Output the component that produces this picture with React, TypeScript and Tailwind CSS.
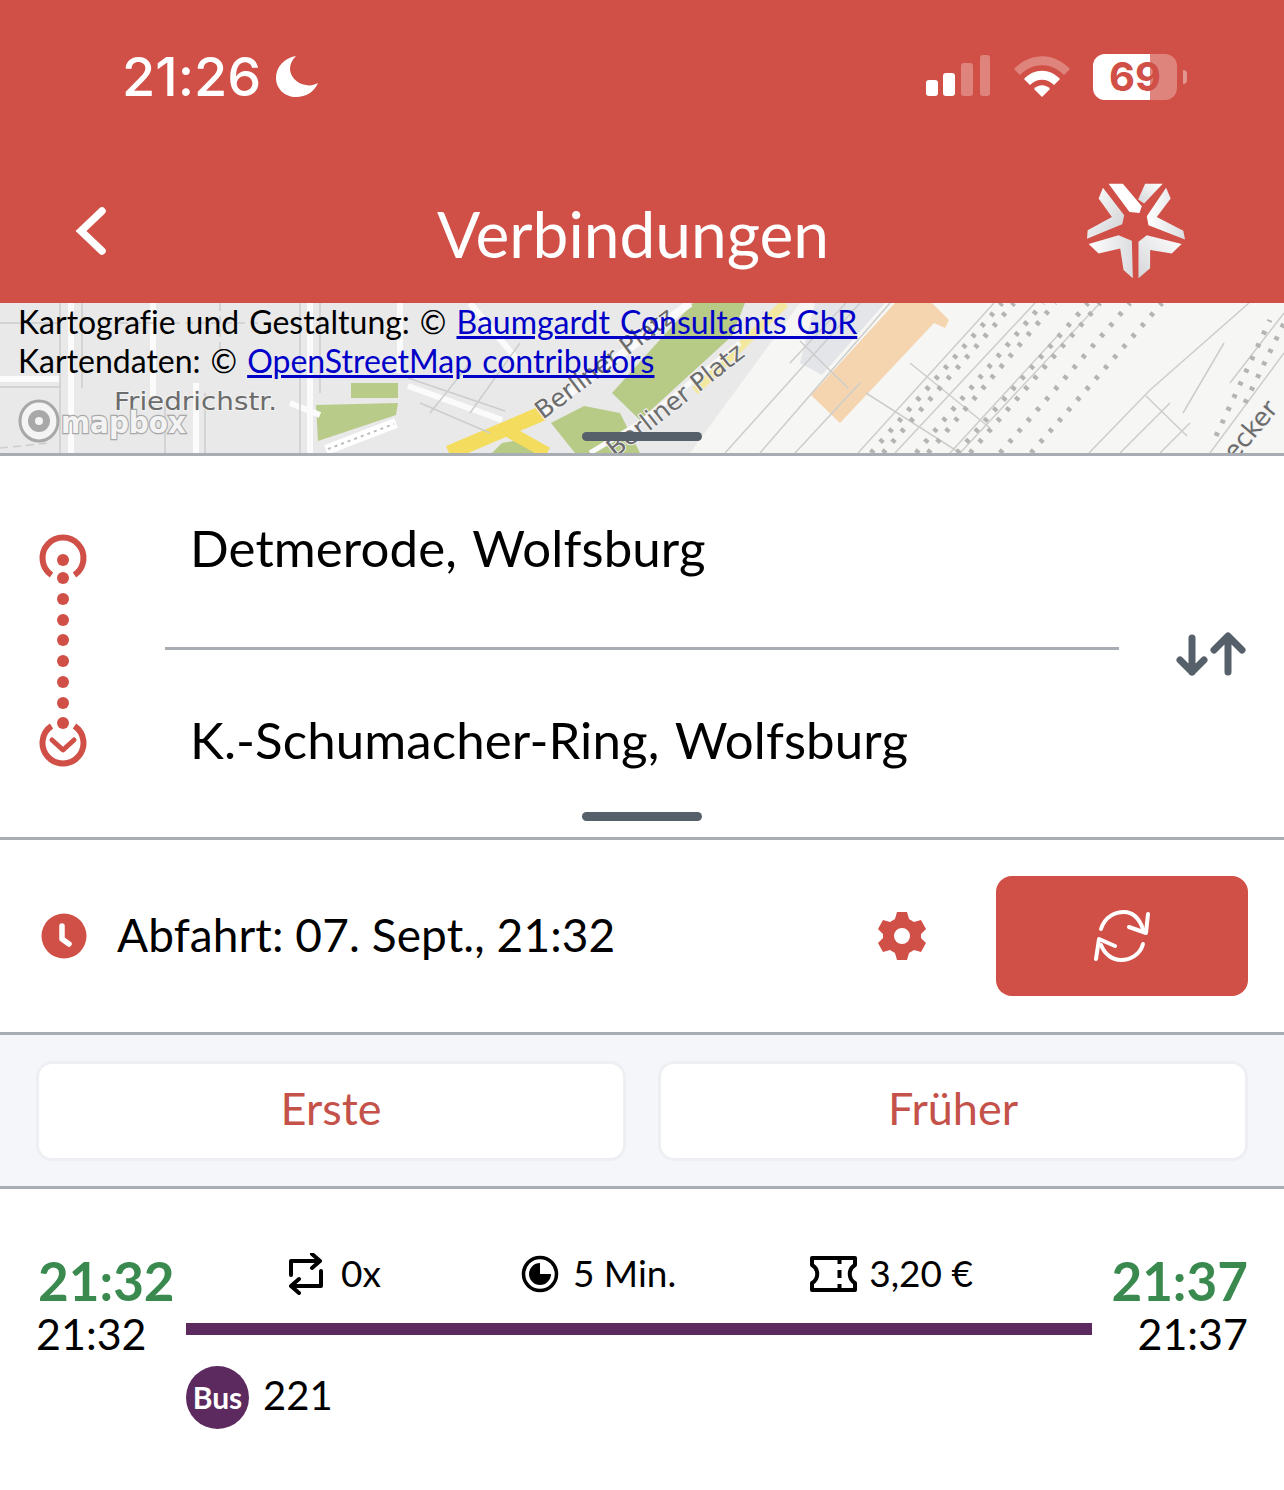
const font = { fontFamily: "Lato, 'Noto Sans', sans-serif" };
const mapLabel = { fontFamily: "'DejaVu Sans', sans-serif", paintOrder: "stroke" } as const;

function MoonIcon() {
  return (
    <svg width="42" height="42" viewBox="0 0 42 42">
      <path d="M20 0 C8 2 0 11 0 22 C0 33 9 41 20 41 C30 41 38 36 42 27 C38 29 34 30 30 29 C20 28 14 19 14 13 C14 8 16 4 20 0 Z" fill="#fff" />
    </svg>
  );
}

function Signal() {
  return (
    <svg width="66" height="44" viewBox="0 0 66 44">
      <rect x="1" y="25" width="12" height="16" rx="3" fill="#fff" />
      <rect x="18" y="18" width="12" height="23" rx="3" fill="#fff" />
      <rect x="36" y="8" width="12" height="33" rx="3" fill="#fff" fillOpacity="0.3" />
      <rect x="55" y="0" width="10" height="41" rx="3" fill="#fff" fillOpacity="0.3" />
    </svg>
  );
}

function Wifi() {
  return (
    <svg width="58" height="44" viewBox="0 0 58 44">
      <path d="M1 14 C17 -3 41 -3 57 14 L51 20 C38 7 20 7 7 20 Z" fill="#fff" fillOpacity="0.3" />
      <path d="M11 24 C21 13 37 13 47 24 L41 30 C34 23 24 23 17 30 Z" fill="#fff" />
      <path d="M21 34 C25 29 33 29 37 34 L29 42 Z" fill="#fff" />
    </svg>
  );
}

function Battery() {
  return (
    <div className="flex items-center">
      <div className="relative w-[84px] h-[46px] rounded-[12px] overflow-hidden bg-white/30">
        <div className="absolute left-0 top-0 bottom-0 w-[57px] bg-white" />
        <span className="absolute inset-0 flex items-center justify-center text-[40px] leading-none font-bold text-[#d04f46]" style={{ fontFamily: "Inter, sans-serif" }}>69</span>
      </div>
      <div className="w-[4px] h-[14px] ml-[6px] rounded-r-full bg-white/40" />
    </div>
  );
}

function BackChevron() {
  return (
    <svg width="36" height="50" viewBox="0 0 36 50" fill="none" stroke="#fff" strokeWidth="7.5" strokeLinecap="round" strokeLinejoin="miter">
      <path d="M29 5 L8 25 L29 45" />
    </svg>
  );
}

function Logo() {
  return (
    <svg width="102" height="98" viewBox="75 35 305 295">
      <defs>
        <linearGradient id="foldA" x1="0" y1="0" x2="1" y2="1">
          <stop offset="0" stopColor="#ffffff" />
          <stop offset="1" stopColor="#cfd0d3" />
        </linearGradient>
        <linearGradient id="foldB" x1="1" y1="0" x2="0" y2="1">
          <stop offset="0" stopColor="#ffffff" />
          <stop offset="1" stopColor="#d5d6d9" />
        </linearGradient>
        <linearGradient id="foldC" x1="0" y1="0" x2="1" y2="0">
          <stop offset="0" stopColor="#ffffff" />
          <stop offset="1" stopColor="#dcdde0" />
        </linearGradient>
      </defs>
      <path d="M145 40 L188 40 L245 108 L238 128 L208 125 Z" fill="#fff" />
      <path d="M255 40 L308 40 L252 100 L234 88 Z" fill="url(#foldB)" />
      <path d="M128 52 L115 85 L155 140 L82 180 L80 206 L186 162 L192 135 Z" fill="url(#foldA)" />
      <path d="M318 52 L332 85 L290 140 L370 182 L375 208 L265 165 L260 138 Z" fill="url(#foldC)" />
      <path d="M85 222 L175 195 L215 212 L218 325 L190 300 L180 235 L115 250 Z" fill="url(#foldC)" />
      <path d="M365 222 L260 195 L235 215 L235 325 L270 295 L270 240 L335 250 Z" fill="url(#foldB)" />
    </svg>
  );
}

function MapBackground() {
  return (
    <svg width="1284" height="150" viewBox="0 0 1284 150" className="absolute inset-0">
      <rect width="1284" height="150" fill="#f6f6f4" />
      <path d="M0 0 H800 L690 150 H0 Z" fill="#e9e9e9" />
      <path d="M815 0 H885 L822 72 L800 60 Z" fill="#e3e5e9" />

      <path d="M351 80 H398 V95 H351 Z" fill="#b9cb89" />
      <path d="M316 102 L398 100 L396 112 L318 138 Z" fill="#b9cb89" />
      <path d="M326 147 L396 120" stroke="#fff" strokeWidth="10" fill="none" />
      <path d="M328 146 L394 121" stroke="#bdbdbd" strokeWidth="2" strokeDasharray="3 4" fill="none" />

      <path d="M612 90 L693 0 H745 L732 33 L640 117 Z" fill="#b7ca86" />
      <path d="M551 120 L584 103 L620 110 L640 150 H575 Z" fill="#b7ca86" />
      <path d="M502 140 L530 135 L535 150 H492 Z" fill="#b7ca86" />

      <path d="M449 150 L543 110" stroke="#f3dc5e" strokeWidth="15" fill="none" />
      <path d="M506 127 L547 150" stroke="#f3dc5e" strokeWidth="12" fill="none" />
      <path d="M785 0 L695 88" stroke="#f3e8a0" strokeWidth="9" fill="none" />
      <path d="M543 110 L690 0" stroke="#fafafa" strokeWidth="8" fill="none" />
      <path d="M590 150 L640 120 L740 40" stroke="#fafafa" strokeWidth="5" fill="none" />

      <path d="M895 0 H932 L949 17 L945 25 L934 20 L840 120 L811 92 Z" fill="#f5d5b0" />

      <g stroke="#fbfbfb" strokeWidth="6" fill="none">
        <path d="M0 76 H60 M71 0 V150 M153 0 V95 M196 80 V150 M310 0 V150 M290 100 L320 112 M408 83 L502 117 M470 0 L520 60 M400 0 V70" />
      </g>
      <g stroke="#cdcdcd" strokeWidth="1.5" fill="none">
        <path d="M0 20 H60 M0 84 H60 M60 0 V150 M82 0 V85 M165 100 V150 M205 90 V150 M300 0 V150 M320 0 V90 M408 75 L505 108 M420 100 L490 130 M470 60 L430 110 M520 40 L470 110" />
        <path d="M0 145 L50 140 M120 20 H290 M220 0 V60" strokeDasharray="8 5" />
        <path d="M725 150 L860 0 M760 150 L890 0 M795 150 L860 80 M848 85 L800 38 M846 0 L790 60" />
        <path d="M858 150 L994 0 M895 150 L1035 0 M1089 150 L1150 87 L1249 0 M1120 150 L1170 100 M1146 93 L1187 133 M1224 40 L1183 110 M1160 150 L1190 120 M1210 150 L1284 50 M1230 80 L1284 10 M866 90 L960 150 M910 60 L990 125 M950 150 L1060 30 M1100 0 L960 150" />
      </g>
      <g stroke="#b4b4b4" strokeWidth="5" strokeDasharray="4 10" fill="none">
        <path d="M871 150 L1002 0 M883 150 L1014 0 M916 150 L1043 0 M928 150 L1055 0 M957 150 L1088 0 M970 150 L1100 0 M1000 150 L1130 0 M1031 150 L1162 0 M1216 133 L1270 17 M1245 100 L1284 20" />
      </g>

      <text x="114" y="107" fontSize="25" fill="#6c6c6c" stroke="#f2f2f2" strokeWidth="2" style={mapLabel} textLength="163" lengthAdjust="spacingAndGlyphs">Friedrichstr.</text>
      <text fontSize="25" fill="#6c6c6c" stroke="#f2f2f2" strokeWidth="2" style={mapLabel} transform="translate(543 117) rotate(-37)">Berliner Platz</text>
      <text fontSize="25" fill="#6c6c6c" stroke="#f2f2f2" strokeWidth="2" style={mapLabel} transform="translate(615 155) rotate(-38)">Berliner Platz</text>
      <text fontSize="25" fill="#6c6c6c" stroke="#f2f2f2" strokeWidth="2" style={mapLabel} transform="translate(1224 172) rotate(-50)">Becker</text>

      <ellipse cx="39" cy="118" rx="19" ry="20" fill="#f4f4f4" stroke="#a8a8a8" strokeWidth="3" />
      <circle cx="39" cy="118" r="11" fill="#a8a8a8" />
      <circle cx="39" cy="118" r="4" fill="#f4f4f4" />
      <text x="61" y="130" fontSize="31" fontWeight="700" fill="#f3f3f3" stroke="#a8a8a8" strokeWidth="2.4" style={mapLabel} textLength="125" lengthAdjust="spacingAndGlyphs">mapbox</text>
    </svg>
  );
}

function RouteLine() {
  return (
    <svg width="54" height="240" viewBox="0 0 54 240">
      <path d="M15.5 43 A20.5 20.5 0 1 1 38.5 43" stroke="#d04f46" strokeWidth="6" fill="none" />
      {[28, 46, 67, 88, 108, 129, 150, 171, 191].map((y) => (
        <circle key={y} cx="27" cy={y} r="6" fill="#d04f46" />
      ))}
      <path d="M15.5 194 A20.5 20.5 0 1 0 38.5 194" stroke="#d04f46" strokeWidth="6" fill="none" />
      <path d="M16 208 L27 218 L38 208" stroke="#d04f46" strokeWidth="5" strokeLinecap="round" strokeLinejoin="round" fill="none" />
    </svg>
  );
}

function SwapArrows() {
  return (
    <svg width="72" height="46" viewBox="0 0 72 46" fill="none" stroke="#56606a" strokeWidth="7" strokeLinecap="round" strokeLinejoin="round">
      <path d="M18 6 V40 M6 28 L18 40 L30 28" />
      <path d="M54 40 V6 M40 18 L54 4 L68 18" />
    </svg>
  );
}

function Gear() {
  return (
    <svg width="50" height="50" viewBox="0 0 50 50">
      <path
        fillRule="evenodd"
        fill="#d04f46"
        d="M20 1 H30 L32 8 L37 11 L44 9 L49 18 L44 23 V27 L49 32 L44 41 L37 39 L32 42 L30 49 H20 L18 42 L13 39 L6 41 L1 32 L6 27 V23 L1 18 L6 9 L13 11 L18 8 Z M25 17 A8 8 0 1 0 25 33 A8 8 0 1 0 25 17 Z"
      />
    </svg>
  );
}

function ClockIcon() {
  return (
    <svg width="46" height="46" viewBox="0 0 46 46">
      <circle cx="23" cy="23" r="22.5" fill="#d04f46" />
      <path d="M21 13 V26 L28 31" stroke="#fff" strokeWidth="5.5" strokeLinecap="round" strokeLinejoin="round" fill="none" />
    </svg>
  );
}

function RefreshIcon() {
  return (
    <svg width="56" height="54" viewBox="0 0 56 54" fill="none" stroke="#fff" strokeWidth="4" strokeLinecap="round">
      <path d="M7 20 C11 7 22 3 30 3 C38 3 45 9 49 20" />
      <path d="M54 5 L52 24 L35 18" strokeLinejoin="round" />
      <path d="M49 35 C46 46 36 51 27 51 C19 51 11 46 7 36" />
      <path d="M2 50 L5 30 L21 37" strokeLinejoin="round" />
    </svg>
  );
}

function TransferIcon() {
  return (
    <svg width="37" height="42" viewBox="0 0 37 42" fill="none" stroke="#000" strokeWidth="4" strokeLinecap="round" strokeLinejoin="round">
      <path d="M3 22 V8 H32 M24 1 L32 8 L24 15" />
      <path d="M33 18 V33 H3 M11 26 L3 33 L11 40" />
    </svg>
  );
}

function DurationIcon() {
  return (
    <svg width="38" height="38" viewBox="0 0 38 38">
      <circle cx="19" cy="19" r="16.5" stroke="#000" strokeWidth="3.5" fill="none" />
      <path d="M19 8 A11 11 0 1 0 30 19 H19 Z" fill="#000" />
    </svg>
  );
}

function TicketIcon() {
  return (
    <svg width="47" height="36" viewBox="0 0 47 36" fill="none" stroke="#000" strokeWidth="4" strokeLinejoin="round">
      <path d="M2 2 H45 V9 C38 13 38 23 45 27 V34 H2 V27 C9 23 9 13 2 9 Z" />
      <path d="M29.5 4 V8 M29.5 14 V22 M29.5 28 V32" />
    </svg>
  );
}

function PagerButton({ label }: { label: string }) {
  return (
    <button className="flex-1 h-[100px] pb-[4px] bg-white rounded-[16px] border-[3px] border-[#edeff2] text-[#c4524a] text-[45px]">
      {label}
    </button>
  );
}

export default function App() {
  return (
    <div className="w-[1284px] h-[1490px] bg-white overflow-hidden flex flex-col [font-variant-ligatures:none]" style={font}>
      <header className="h-[303px] bg-[#d04f46] text-white flex flex-col">
        <div className="flex items-center justify-between pl-[122px] pr-[97px] h-[154px]">
          <div className="flex items-center gap-[15px]">
            <span className="text-[54px] font-medium leading-none" style={{ fontFamily: "Inter, sans-serif" }}>21:26</span>
            <MoonIcon />
          </div>
          <div className="flex items-center gap-[22px]">
            <Signal />
            <Wifi />
            <Battery />
          </div>
        </div>
        <div className="flex items-center flex-1 pl-[73px] pr-[97px] pt-[5px]">
          <BackChevron />
          <h1 className="ml-[328px] mt-[6px] text-[64px] leading-none">Verbindungen</h1>
          <div className="ml-auto"><Logo /></div>
        </div>
      </header>

      <section className="relative h-[153px] border-b-[3px] border-[#a8adb3] overflow-hidden shrink-0">
        <MapBackground />
        <div className="absolute left-[18px] -top-[1px] text-[32px] leading-[39px] [word-spacing:1.8px] text-black">
          <p>Kartografie und Gestaltung: © <a href="#" className="underline text-[#0000c8]">Baumgardt Consultants GbR</a></p>
          <p>Kartendaten: © <a href="#" className="underline text-[#0000c8]">OpenStreetMap contributors</a></p>
        </div>
        <div className="absolute left-[582px] bottom-[12px] w-[120px] h-[9px] rounded-full bg-[#56606a]" />
      </section>

      <section className="relative h-[384px] shrink-0 border-b-[3px] border-[#a8adb3] flex">
        <div className="pl-[36px] pt-[76px] w-[165px] shrink-0">
          <RouteLine />
        </div>
        <div className="w-[954px] flex flex-col text-[51px] tracking-[0.1px] [word-spacing:3px] text-black">
          <div className="h-[194px] border-b-[3px] border-[#a8adb3] flex items-center pl-[25px] pb-[6px]">Detmerode, Wolfsburg</div>
          <div className="flex-1 flex items-center pl-[25px] pb-[6px]">K.-Schumacher-Ring, Wolfsburg</div>
        </div>
        <div className="flex-1 flex items-start pt-[176px] pl-[55px]">
          <SwapArrows />
        </div>
        <div className="absolute left-[582px] bottom-[16px] w-[120px] h-[9px] rounded-full bg-[#56606a]" />
      </section>

      <section className="h-[195px] shrink-0 border-b-[3px] border-[#a8adb3] flex items-center pl-[41px] pr-[36px]">
        <ClockIcon />
        <span className="ml-[30px] pb-[4px] text-[46px] tracking-[0.1px] text-black">Abfahrt: 07. Sept., 21:32</span>
        <div className="ml-auto mr-[69px]"><Gear /></div>
        <button className="w-[252px] h-[120px] rounded-[16px] bg-[#d04f46] flex items-center justify-center">
          <RefreshIcon />
        </button>
      </section>

      <section className="h-[154px] shrink-0 bg-[#f4f6fa] border-b-[3px] border-[#a8adb3] flex items-center gap-[32px] px-[36px]">
        <PagerButton label="Erste" />
        <PagerButton label="Früher" />
      </section>

      <section className="flex pt-[64px] px-[36px]">
        <div className="w-[150px] shrink-0">
          <div className="text-[53px] leading-[56px] font-bold text-[#3a8a4f] pl-[2px]">21:32</div>
          <div className="text-[43px] leading-[50px] text-black">21:32</div>
        </div>
        <div className="flex-1 flex flex-col">
          <div className="h-[42px] flex items-center text-[37px] text-black">
            <div className="flex items-center gap-[16px] ml-[102px]">
              <TransferIcon />
              <span className="pb-[3px]">0x</span>
            </div>
            <div className="flex items-center gap-[14px] ml-[140px]">
              <DurationIcon />
              <span className="pb-[3px]">5 Min.</span>
            </div>
            <div className="flex items-center gap-[12px] ml-[134px]">
              <TicketIcon />
              <span className="pb-[3px]">3,20 €</span>
            </div>
          </div>
          <div className="h-[12px] bg-[#5c2a5e] mt-[28px]" />
          <div className="flex items-center gap-[14px] mt-[30px]">
            <div className="w-[63px] h-[63px] rounded-full bg-[#5c2a5e] text-white text-[30px] font-bold flex items-center justify-center">Bus</div>
            <span className="text-[40px] pb-[5px] text-black">221</span>
          </div>
        </div>
        <div className="w-[156px] shrink-0 text-right">
          <div className="text-[53px] leading-[56px] font-bold text-[#3a8a4f]">21:37</div>
          <div className="text-[43px] leading-[50px] text-black">21:37</div>
        </div>
      </section>
    </div>
  );
}
